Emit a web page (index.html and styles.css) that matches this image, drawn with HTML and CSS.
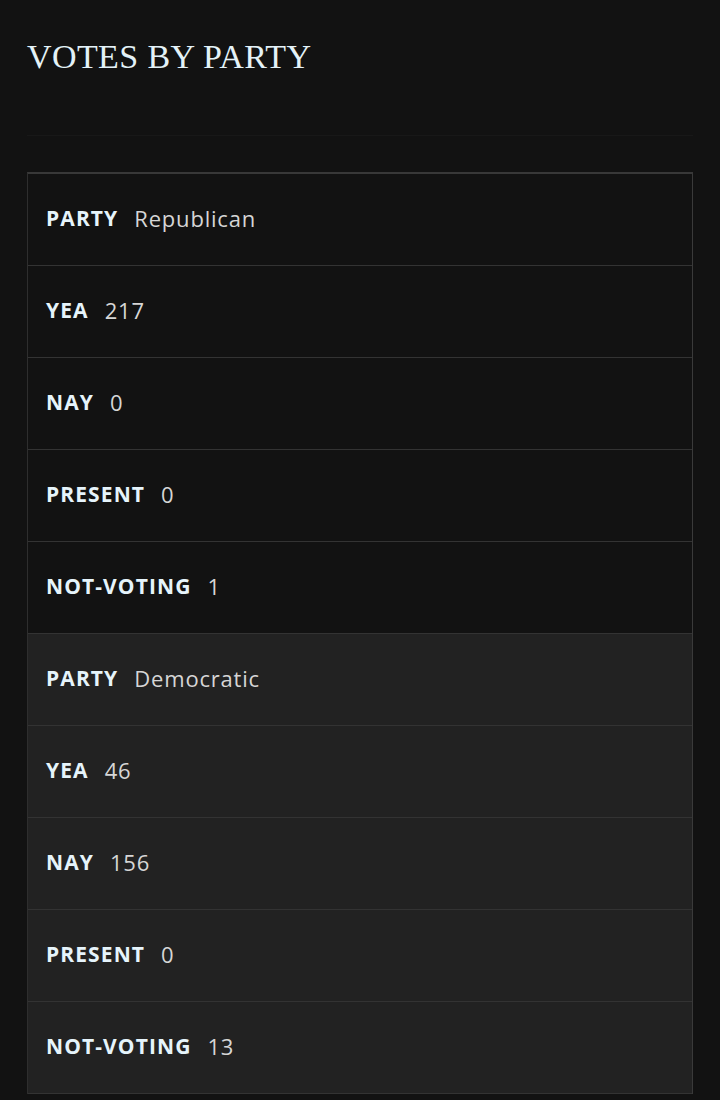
FILE: index.html
```html
<!DOCTYPE html>
<html>
<head>
<meta charset="utf-8">
<link rel="stylesheet" href="styles.css">
</head>
<body>
<main class="page">
  <h2 class="title">VOTES BY PARTY</h2>
  <div class="rule"></div>
  <div class="table">
    <div class="group">
      <div class="row"><span class="label">PARTY</span><span class="value">Republican</span></div>
      <div class="row"><span class="label">YEA</span><span class="value">217</span></div>
      <div class="row"><span class="label">NAY</span><span class="value">0</span></div>
      <div class="row"><span class="label">PRESENT</span><span class="value">0</span></div>
      <div class="row"><span class="label">NOT-VOTING</span><span class="value">1</span></div>
    </div>
    <div class="group alt">
      <div class="row"><span class="label">PARTY</span><span class="value">Democratic</span></div>
      <div class="row"><span class="label">YEA</span><span class="value">46</span></div>
      <div class="row"><span class="label">NAY</span><span class="value">156</span></div>
      <div class="row"><span class="label">PRESENT</span><span class="value">0</span></div>
      <div class="row"><span class="label">NOT-VOTING</span><span class="value">13</span></div>
    </div>
  </div>
</main>
</body>
</html>
```

FILE: styles.css
```css
html, body {
  margin: 0;
  padding: 0;
  background: #121212;
}
.page {
  padding: 0 27px;
  width: 666px;
}
.title {
  margin: 0;
  padding-top: 37px;
  font-family: "Liberation Serif", "DejaVu Serif", serif;
  font-weight: normal;
  font-size: 34px;
  line-height: 40px;
  letter-spacing: 0.4px;
  color: #e4f2f8;
}
.rule {
  margin-top: 58px;
  height: 1px;
  background: #181818;
}
.table {
  margin-top: 36px;
  border-top: 2px solid #383838;
  border-left: 1px solid #2e2e2e;
  border-right: 1px solid #3a3a3a;
}
.group {
  background: #121212;
}
.group.alt {
  background: #222222;
}
.row {
  display: flex;
  align-items: center;
  box-sizing: border-box;
  height: 92px;
  padding: 0 0 3px 18px;
  border-bottom: 1px solid #333333;
  font-family: "Open Sans", "Noto Sans", sans-serif;
  font-size: 21px;
}
.label {
  font-weight: 700;
  letter-spacing: 1.1px;
  color: #e6f4fb;
  margin-right: 16px;
}
.value {
  font-size: 22px;
  color: #d6d6d6;
  letter-spacing: 0.8px;
}
```
